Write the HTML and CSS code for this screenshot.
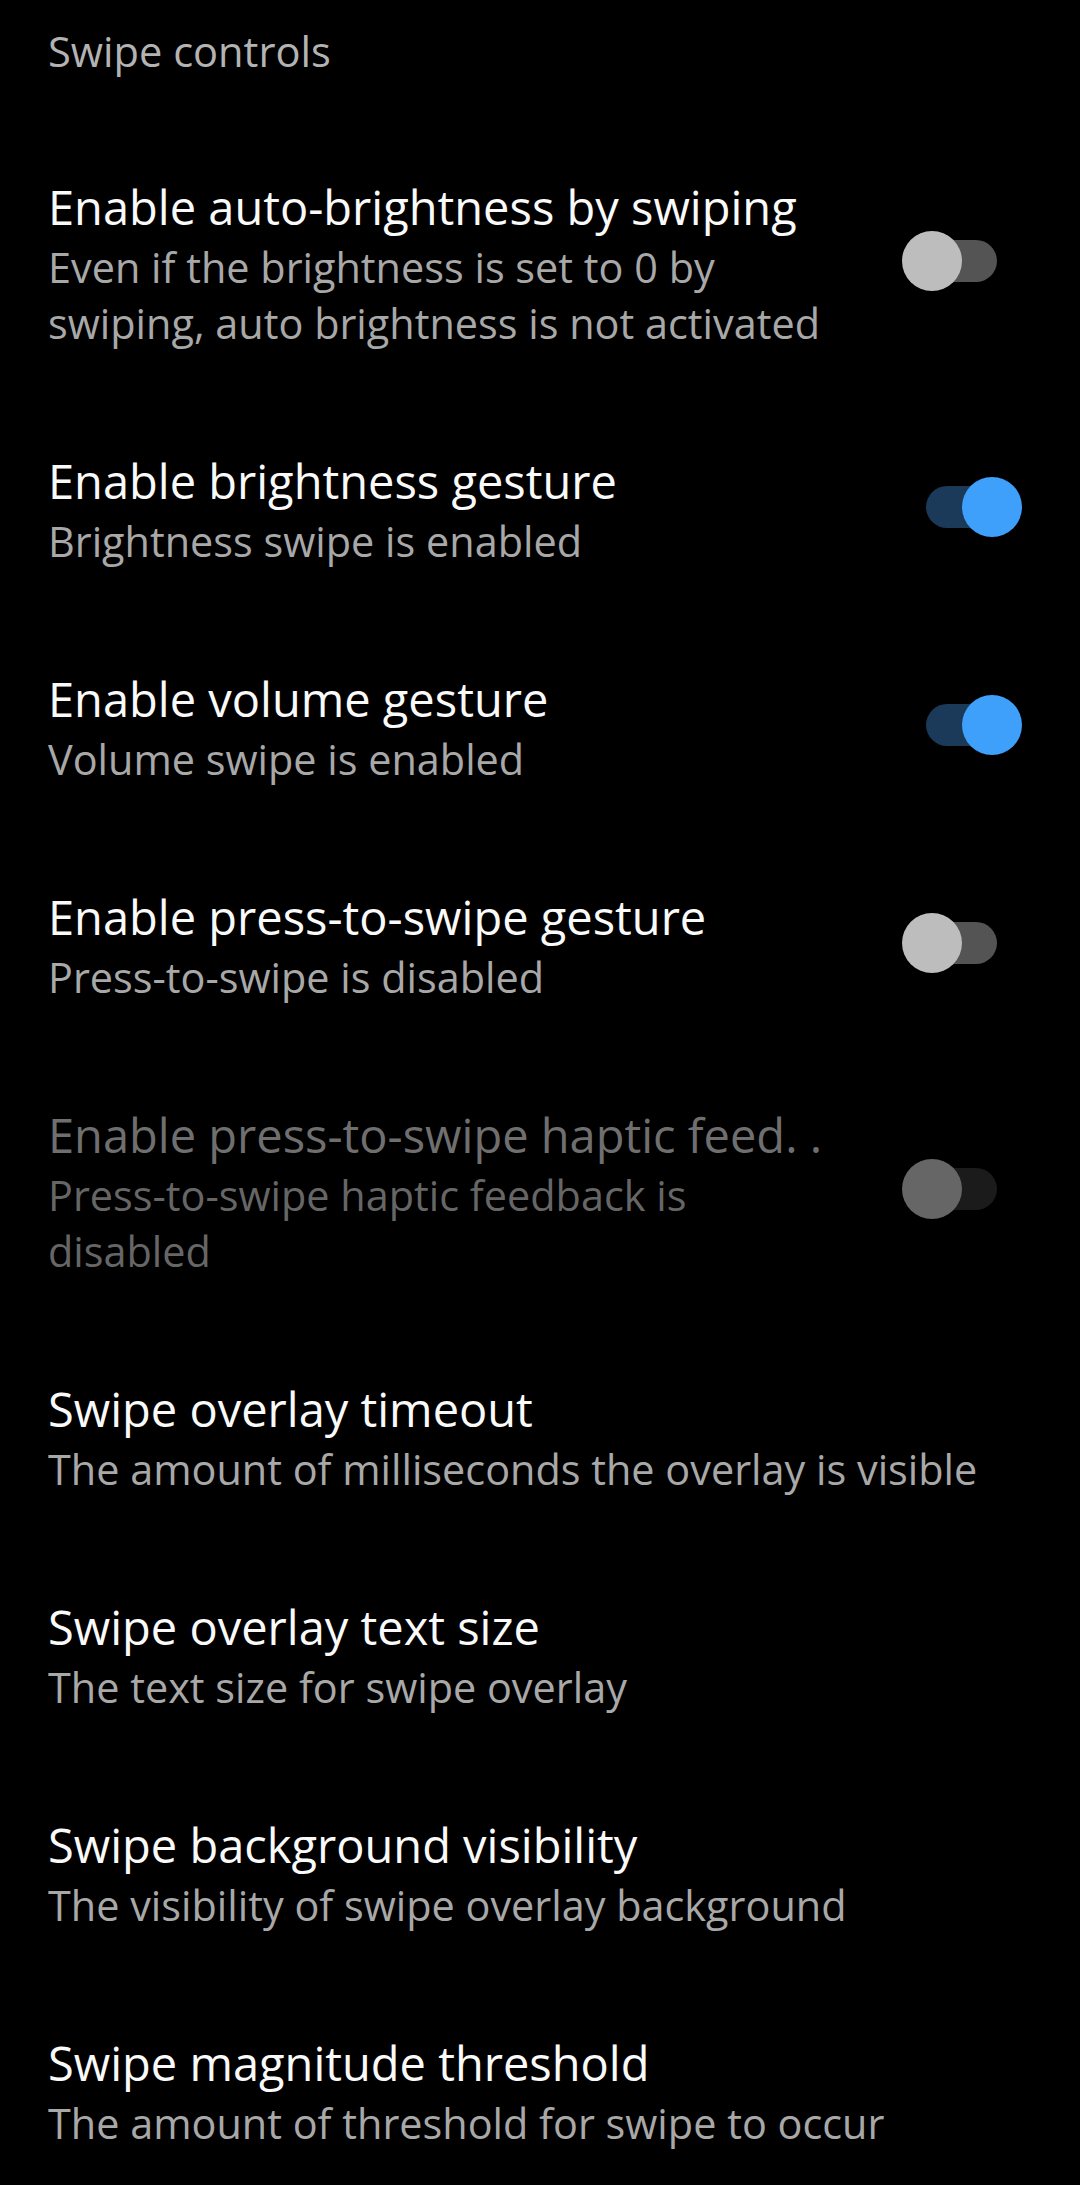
FILE: index.html
```html
<!DOCTYPE html>
<html lang="en">
<head>
<meta charset="utf-8">
<title>Swipe controls</title>
<link rel="stylesheet" href="styles.css">
</head>
<body>
<div class="screen">
  <div class="header">Swipe controls</div>

  <div class="item">
    <div class="text">
      <div class="title">Enable auto-brightness by swiping</div>
      <div class="sub">Even if the brightness is set to 0 by swiping, auto brightness is not activated</div>
    </div>
    <div class="switch off"><span class="track"></span><span class="knob"></span></div>
  </div>

  <div class="item">
    <div class="text">
      <div class="title">Enable brightness gesture</div>
      <div class="sub">Brightness swipe is enabled</div>
    </div>
    <div class="switch on"><span class="track"></span><span class="knob"></span></div>
  </div>

  <div class="item">
    <div class="text">
      <div class="title">Enable volume gesture</div>
      <div class="sub">Volume swipe is enabled</div>
    </div>
    <div class="switch on"><span class="track"></span><span class="knob"></span></div>
  </div>

  <div class="item">
    <div class="text">
      <div class="title">Enable press-to-swipe gesture</div>
      <div class="sub">Press-to-swipe is disabled</div>
    </div>
    <div class="switch off"><span class="track"></span><span class="knob"></span></div>
  </div>

  <div class="item disabled">
    <div class="text">
      <div class="title">Enable press-to-swipe haptic feed. .</div>
      <div class="sub">Press-to-swipe haptic feedback is disabled</div>
    </div>
    <div class="switch off"><span class="track"></span><span class="knob"></span></div>
  </div>

  <div class="item">
    <div class="text">
      <div class="title">Swipe overlay timeout</div>
      <div class="sub">The amount of milliseconds the overlay is visible</div>
    </div>
  </div>

  <div class="item">
    <div class="text">
      <div class="title">Swipe overlay text size</div>
      <div class="sub">The text size for swipe overlay</div>
    </div>
  </div>

  <div class="item">
    <div class="text">
      <div class="title">Swipe background visibility</div>
      <div class="sub">The visibility of swipe overlay background</div>
    </div>
  </div>

  <div class="item">
    <div class="text">
      <div class="title">Swipe magnitude threshold</div>
      <div class="sub">The amount of threshold for swipe to occur</div>
    </div>
  </div>
</div>
</body>
</html>
```

FILE: styles.css
```css
html, body {
  margin: 0;
  padding: 0;
  background: #000;
}

.screen {
  width: 1080px;
  min-height: 2185px;
  background: #000;
  font-family: "Open Sans", "Noto Sans", sans-serif;
  overflow: hidden;
}

.header {
  padding: 23px 48px 47px;
  font-size: 41.6px;
  line-height: 56px;
  color: #b3b3b3;
}

.item {
  display: flex;
  align-items: center;
  padding: 49.5px 58px 49.5px 48px;
  gap: 64px;
}

.text {
  flex: 1;
  min-width: 0;
}

.title {
  font-size: 47px;
  line-height: 63px;
  color: #fafafa;
  white-space: nowrap;
}

.sub {
  font-size: 41.4px;
  line-height: 56px;
  color: #a8a8a8;
}

.disabled .title {
  color: #6f6f6f;
}

.disabled .sub {
  color: #666;
}

.switch {
  position: relative;
  flex: none;
  width: 120px;
  height: 60px;
  margin-top: -5px;
}

.track {
  position: absolute;
  left: 24px;
  top: 9px;
  width: 71px;
  height: 42px;
  border-radius: 21px;
  background: #545454;
}

.knob {
  position: absolute;
  top: 0;
  left: 0;
  width: 60px;
  height: 60px;
  border-radius: 50%;
  background: #bdbdbd;
}

.switch.on .track {
  background: #1b3a59;
}

.switch.on .knob {
  left: 60px;
  background: #3ea0fa;
}

.disabled .track {
  background: #1b1b1b;
}

.disabled .knob {
  background: #666;
}
```
